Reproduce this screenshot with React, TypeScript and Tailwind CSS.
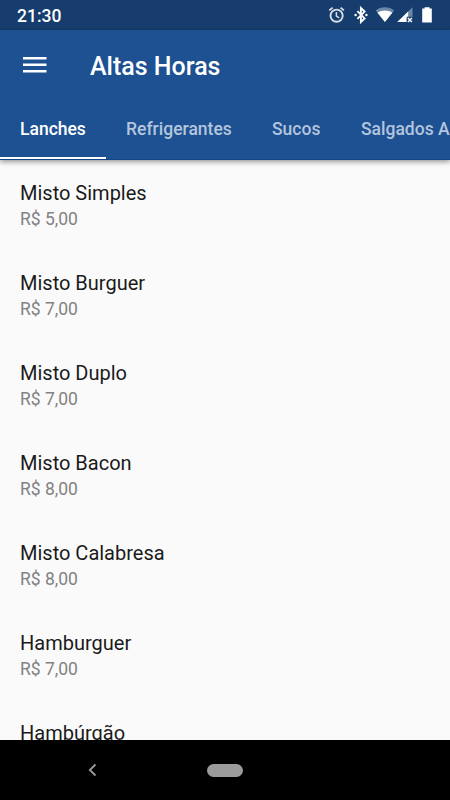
const items = [
  { name: 'Misto Simples', price: 'R$ 5,00' },
  { name: 'Misto Burguer', price: 'R$ 7,00' },
  { name: 'Misto Duplo', price: 'R$ 7,00' },
  { name: 'Misto Bacon', price: 'R$ 8,00' },
  { name: 'Misto Calabresa', price: 'R$ 8,00' },
  { name: 'Hamburguer', price: 'R$ 7,00' },
  { name: 'Hambúrgão', price: '' },
];

function StatusBar() {
  return (
    <div className="flex h-[30px] shrink-0 items-center justify-between bg-[#163d6d] pl-[17px]">
      <span className="pt-[2px] text-[17.5px] leading-[28px] font-medium text-white">21:30</span>
      <svg width="140" height="30" viewBox="310 0 140 30" fill="none">
        <g stroke="#d6dde6" strokeWidth="1.9">
          <circle cx="336.6" cy="15.7" r="6.1" />
          <path d="M336.4 12v4.2l2.8 1.7" strokeWidth="1.5" />
          <path d="M329.3 10.4l3.3-2.8M343.9 10.4l-3.3-2.8" />
        </g>
        <path d="M357.4 11.2l7.2 7.2-3.7 3.6V8l3.7 3.6-7.2 7.2" stroke="#fff" strokeWidth="1.9" />
        <circle cx="355.6" cy="15" r="1.2" fill="#fff" />
        <circle cx="366.4" cy="15" r="1.2" fill="#fff" />
        <path d="M375.7 10.4C381 6.2 388.8 6.2 394.1 10.4L384.9 22z" fill="#6b86a6" />
        <path d="M377.5 12.7C381.5 9.8 388.3 9.8 392.3 12.7L384.9 22z" fill="#fff" />
        <path d="M412.5 7.2v14.8h-15.2z" fill="#6b86a6" />
        <path d="M408.2 11.4v5.2l-1.6 1v4.4h-9.3z" fill="#fff" />
        <path d="M406.8 16.8h5.7v5.2h-5.7z" fill="#163d6d" />
        <path d="M407.9 18l3.9 3.9M411.8 18l-3.9 3.9" stroke="#fff" strokeWidth="1.4" />
        <path d="M424.6 7.2h5v1.2h2.2v14.2h-9.6V8.4h2.4z" fill="#fff" />
      </svg>
    </div>
  );
}

function Header() {
  return (
    <header className="relative z-10 h-[130px] shrink-0 bg-[#1d5192] shadow-[0_2px_5px_rgba(0,0,0,0.4)]">
      <div className="flex h-[70px] items-center pl-[23px]">
        <svg width="24" height="16" viewBox="0 0 24 16" fill="#fff">
          <path d="M0 0h23.5v2.5H0zM0 6.5h23.5V9H0zM0 13h23.5v2.5H0z" />
        </svg>
        <h1 className="ml-[43px] pt-[4px] text-[25px] leading-[30px] font-medium text-white">Altas Horas</h1>
      </div>
      <nav className="flex h-[60px] overflow-hidden border-b border-[#0f458a] text-[17.5px] leading-[20px] font-medium whitespace-nowrap text-[#b4c5dd]">
        <div className="-mb-px flex w-[106px] shrink-0 items-center border-b-3 border-white pl-5 text-white">Lanches</div>
        <div className="flex w-[146px] shrink-0 items-center pb-[2px] pl-5">Refrigerantes</div>
        <div className="flex w-[89px] shrink-0 items-center pb-[2px] pl-5">Sucos</div>
        <div className="flex shrink-0 items-center pb-[2px] pl-5">Salgados A</div>
      </nav>
    </header>
  );
}

export default function App() {
  return (
    <div className="flex h-[800px] w-[450px] flex-col overflow-hidden bg-[#fafafa] font-['Roboto','Noto_Sans',sans-serif]">
      <StatusBar />
      <Header />
      <main className="min-h-0 flex-1 overflow-hidden">
        {items.map((item) => (
          <div key={item.name} className="h-[90px] px-5 pt-5">
            <div className="text-[20px] leading-[26px] text-[#1a1a1a]">{item.name}</div>
            {item.price && <div className="text-[17.5px] leading-[26px] text-[#828282]">{item.price}</div>}
          </div>
        ))}
      </main>
      <footer className="flex h-[60px] shrink-0 items-center bg-black">
        <svg className="ml-[88px]" width="9" height="14" viewBox="0 0 9 14" fill="none">
          <path d="M7.5 1.5L1.8 7l5.7 5.5" stroke="#9b9b9b" strokeWidth="1.8" />
        </svg>
        <div className="ml-[110px] h-[13px] w-[36px] rounded-full bg-[#9b9b9b]" />
      </footer>
    </div>
  );
}
